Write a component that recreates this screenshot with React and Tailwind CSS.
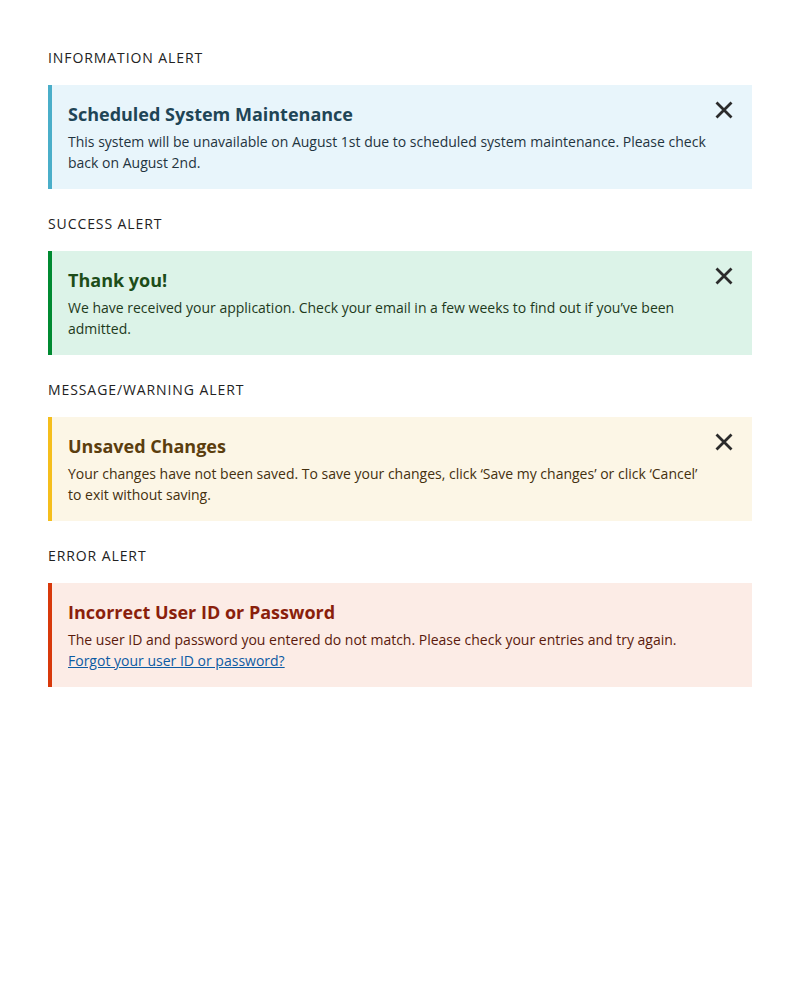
import React from "react";

const os = { fontFamily: '"Open Sans", "Noto Sans", sans-serif' };

function CloseIcon() {
  return (
    <svg width="18" height="18" viewBox="0 0 18 18" className="block">
      <path d="M1.5 1.5 L16.5 16.5 M16.5 1.5 L1.5 16.5" stroke="#2b2b2b" strokeWidth="2.8" strokeLinecap="butt" />
    </svg>
  );
}

function Alert({ label, title, children, bg, border, titleColor, textColor, closable = true }) {
  return (
    <section>
      <div className="text-[14px] leading-[21px] tracking-[0.065em] text-[#222]">{label}</div>
      <div className={`mt-[17px] h-[104px] border-l-4 flex ${bg} ${border}`}>
        <div className="flex-1 pl-4 pt-[16px]">
          <div className={`text-[18px] leading-[26px] font-bold ${titleColor}`}>{title}</div>
          <div className={`mt-[4px] text-[14px] leading-[21px] ${textColor}`}>{children}</div>
        </div>
        {closable && (
          <div className="w-[44px] shrink-0 pt-[16px] pl-[7px]">
            <CloseIcon />
          </div>
        )}
      </div>
    </section>
  );
}

export default function App() {
  return (
    <div className="w-[800px] min-h-[1000px] bg-white px-12 pt-[47px]" style={os}>
      <div className="flex flex-col gap-6">
        <Alert
          label="INFORMATION ALERT"
          title="Scheduled System Maintenance"
          bg="bg-[#e8f5fb]"
          border="border-[#4aaec9]"
          titleColor="text-[#1f4556]"
          textColor="text-[#1f3440]"
        >
          This system will be unavailable on August 1st due to scheduled system maintenance. Please check back on August 2nd.
        </Alert>
        <Alert
          label="SUCCESS ALERT"
          title="Thank you!"
          bg="bg-[#dcf3e8]"
          border="border-[#008a31]"
          titleColor="text-[#1d4d19]"
          textColor="text-[#1e3a1c]"
        >
          We have received your application. Check your email in a few weeks to find out if you’ve been admitted.
        </Alert>
        <Alert
          label="MESSAGE/WARNING ALERT"
          title="Unsaved Changes"
          bg="bg-[#fcf6e6]"
          border="border-[#f5be1c]"
          titleColor="text-[#5b3e0e]"
          textColor="text-[#44300f]"
        >
          Your changes have not been saved. To save your changes, click ‘Save my changes’ or click ‘Cancel’ to exit without saving.
        </Alert>
        <Alert
          label="ERROR ALERT"
          title="Incorrect User ID or Password"
          bg="bg-[#fcece6]"
          border="border-[#d8390b]"
          titleColor="text-[#8a1f0c]"
          textColor="text-[#5a1a0c]"
          closable={false}
        >
          The user ID and password you entered do not match. Please check your entries and try again.
          <br />
          <a href="#" className="text-[#0d5ba3] underline">Forgot your user ID or password?</a>
        </Alert>
      </div>
    </div>
  );
}
